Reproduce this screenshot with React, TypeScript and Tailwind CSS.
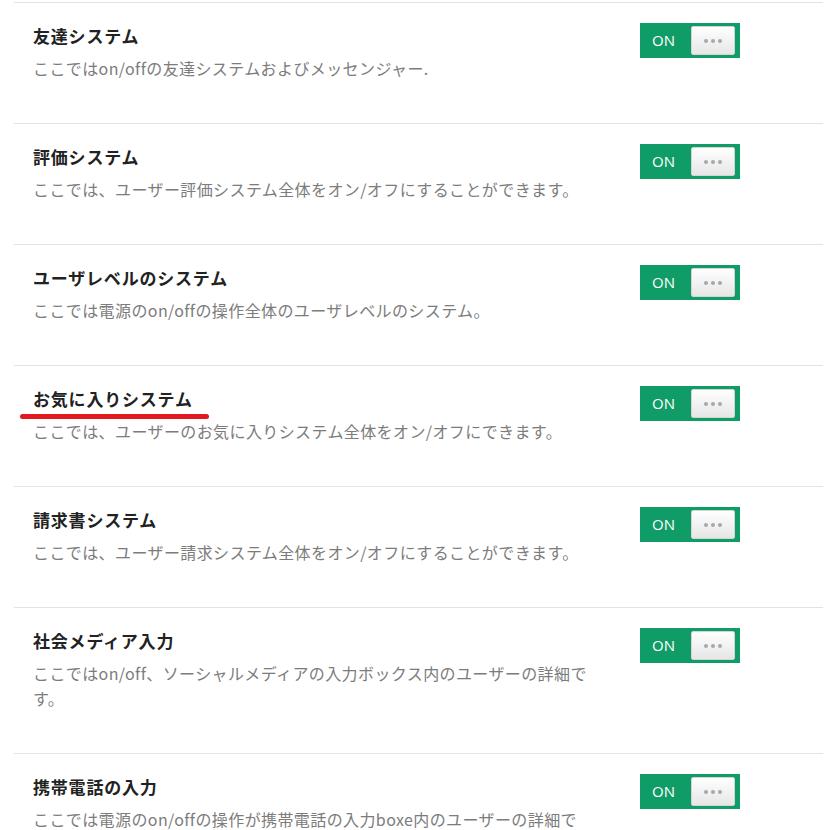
const settings = [
  {
    title: "友達システム",
    desc: "ここではon/offの友達システムおよびメッセンジャー.",
  },
  {
    title: "評価システム",
    desc: "ここでは、ユーザー評価システム全体をオン/オフにすることができます。",
  },
  {
    title: "ユーザレベルのシステム",
    desc: "ここでは電源のon/offの操作全体のユーザレベルのシステム。",
  },
  {
    title: "お気に入りシステム",
    desc: "ここでは、ユーザーのお気に入りシステム全体をオン/オフにできます。",
    marked: true,
  },
  {
    title: "請求書システム",
    desc: "ここでは、ユーザー請求システム全体をオン/オフにすることができます。",
  },
  {
    title: "社会メディア入力",
    desc: "ここではon/off、ソーシャルメディアの入力ボックス内のユーザーの詳細です。",
  },
  {
    title: "携帯電話の入力",
    desc: "ここでは電源のon/offの操作が携帯電話の入力boxe内のユーザーの詳細です。",
  },
];

function Toggle() {
  return (
    <div className="flex h-[35px] w-[100px] items-center justify-between bg-[#109c66] pl-[12px] pr-[5px]">
      <span className="font-['Open_Sans','Liberation_Sans',sans-serif] text-[15px] text-white">ON</span>
      <span className="flex h-[29px] w-[44px] items-center justify-center gap-[3px] rounded-[2px] border border-[#d4d4d4] bg-gradient-to-b from-white to-[#e6e6e6]">
        <span className="h-[4px] w-[4px] rounded-full bg-[#a8a8a8]" />
        <span className="h-[4px] w-[4px] rounded-full bg-[#a8a8a8]" />
        <span className="h-[4px] w-[4px] rounded-full bg-[#a8a8a8]" />
      </span>
    </div>
  );
}

export default function App() {
  return (
    <div className="h-[830px] overflow-hidden bg-white pt-[2px] font-['Noto_Sans_CJK_JP','Noto_Sans',sans-serif]">
      <div className="ml-[14px] mr-[15px]">
        {settings.map((s) => (
          <div
            key={s.title}
            className="flex items-start border-t border-[#e2e2e8] pb-[42px] pl-[19px] pt-[20px]"
          >
            <div className="relative w-[562px] pt-[1px]">
              <h3 className="text-[17px] font-bold leading-[24px] tracking-[0.8px] text-[#222]">{s.title}</h3>
              {s.marked && (
                <span className="absolute left-[-13px] top-[28px] h-[5px] w-[189px] rounded-full bg-[#e3191f]" />
              )}
              <p className="mt-[8px] text-[16px] leading-[25px] tracking-[0.4px] text-[#7c7c7c]">{s.desc}</p>
            </div>
            <div className="ml-[45px]">
              <Toggle />
            </div>
          </div>
        ))}
      </div>
    </div>
  );
}
